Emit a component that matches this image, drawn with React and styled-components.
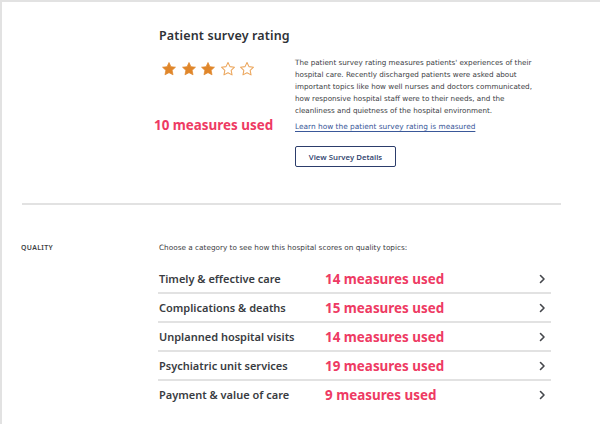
import React from 'react';
import styled, { createGlobalStyle } from 'styled-components';

const Global = createGlobalStyle`
  html, body { margin: 0; padding: 0; background: #ffffff; }
  body { font-family: "DejaVu Sans", "Open Sans", sans-serif; }
  * { box-sizing: border-box; }
`;

const Frame = styled.div`
  width: 600px;
  height: 424px;
  border-top: 2px solid #e2e2e2;
  border-left: 2px solid #e2e2e2;
  overflow: hidden;
  display: flex;
  flex-direction: column;
`;

const SurveySection = styled.section`
  padding: 26px 0 0 152px;
  height: 201px;
`;

const Title = styled.h2`
  margin: 0;
  padding-left: 5px;
  font-family: "Noto Sans", sans-serif;
  font-weight: 600;
  font-size: 12.5px;
  line-height: 16px;
  color: #2f3237;
  letter-spacing: 0.15px;
`;

const SurveyGrid = styled.div`
  display: grid;
  grid-template-columns: 141px 242px;
  margin-top: 13px;
`;

const Summary = styled.div`
  display: flex;
  flex-direction: column;
  align-items: flex-start;
`;

const StarRow = styled.div`
  display: flex;
  gap: 3.5px;
  padding-left: 7px;
  margin-top: 4px;
  height: 16px;
`;

const Measures = styled.span`
  font-family: "Noto Sans", sans-serif;
  font-weight: 700;
  font-size: 13.4px;
  line-height: 18px;
  color: #ee3a63;
  white-space: nowrap;
  margin-top: ${p => p.$top || 0}px;
`;

const Description = styled.div`
  display: flex;
  flex-direction: column;
  align-items: flex-start;
`;

const Paragraph = styled.p`
  margin: 0;
  font-size: 7.2px;
  line-height: 12px;
  color: #3b3c3f;
`;

const LearnLink = styled.a`
  margin-top: 4px;
  font-size: 7.4px;
  line-height: 12px;
  color: #3a5899;
  text-decoration: underline;
  text-underline-offset: 2px;
  white-space: nowrap;
`;

const OutlineButton = styled.button`
  margin-top: 13px;
  width: 101px;
  height: 21px;
  border: 1.5px solid #2c3d6b;
  border-radius: 2px;
  background: #ffffff;
  color: #2c3d6b;
  font-family: "Open Sans", sans-serif;
  font-weight: 600;
  font-size: 7.8px;
  padding: 0;
`;

const Divider = styled.hr`
  margin: 0 0 0 20px;
  width: 539px;
  height: 2px;
  border: none;
  background: #e2e2e2;
`;

const QualitySection = styled.section`
  display: grid;
  grid-template-columns: 137px 393px;
  padding: 37px 0 0 19px;
`;

const SectionLabel = styled.span`
  font-family: "Noto Sans", sans-serif;
  font-weight: 600;
  font-size: 6.9px;
  line-height: 12px;
  letter-spacing: 0.35px;
  color: #3d3f44;
`;

const Intro = styled.p`
  margin: 0;
  padding-left: 1px;
  font-size: 7.3px;
  line-height: 12px;
  color: #3b3c3f;
  white-space: nowrap;
`;

const CategoryList = styled.ul`
  list-style: none;
  margin: 11px 0 0;
  padding: 0;
`;

const CategoryRow = styled.li`
  display: grid;
  grid-template-columns: 167px 1fr auto;
  align-items: center;
  height: 29px;
  padding-right: 5px;
  border-bottom: ${p => (p.$last ? 'none' : '2px solid #e2e2e2')};
  padding-bottom: ${p => (p.$last ? '2px' : '0')};
`;

const CategoryName = styled.span`
  padding-left: 1px;
  font-family: "Noto Sans", sans-serif;
  font-weight: 600;
  font-size: 11px;
  color: #393c42;
  white-space: nowrap;
`;

const Star = ({ filled }) => (
  <svg width="16" height="16" viewBox="0 0 24 24">
    <path
      d="M12 2.2l2.95 6.25 6.8.85-5 4.7 1.3 6.8L12 17.5l-6.05 3.3 1.3-6.8-5-4.7 6.8-.85z"
      fill={filled ? '#e0862a' : 'none'}
      stroke={filled ? '#e0862a' : '#eca75e'}
      strokeWidth={filled ? 1 : 1.6}
      strokeLinejoin="round"
    />
  </svg>
);

const Chevron = () => (
  <svg width="7" height="10" viewBox="0 0 7 10">
    <path d="M1.5 1.5L5 5 1.5 8.5" fill="none" stroke="#45474c" strokeWidth="1.6" strokeLinecap="round" strokeLinejoin="round" />
  </svg>
);

const categories = [
  ['Timely & effective care', 14],
  ['Complications & deaths', 15],
  ['Unplanned hospital visits', 14],
  ['Psychiatric unit services', 19],
  ['Payment & value of care', 9],
];

export default function App() {
  return (
    <>
      <Global />
      <Frame>
        <SurveySection>
          <Title>Patient survey rating</Title>
          <SurveyGrid>
            <Summary>
              <StarRow>
                {[1, 2, 3, 4, 5].map(i => (
                  <Star key={i} filled={i <= 3} />
                ))}
              </StarRow>
              <Measures $top={39}>10 measures used</Measures>
            </Summary>
            <Description>
              <Paragraph>
                The patient survey rating measures patients' experiences of their hospital care. Recently discharged patients were asked about important topics like how well nurses and doctors communicated, how responsive hospital staff were to their needs, and the cleanliness and quietness of the hospital environment.
              </Paragraph>
              <LearnLink href="#">Learn how the patient survey rating is measured</LearnLink>
              <OutlineButton>View Survey Details</OutlineButton>
            </Description>
          </SurveyGrid>
        </SurveySection>
        <Divider />
        <QualitySection>
          <SectionLabel>QUALITY</SectionLabel>
          <div>
            <Intro>Choose a category to see how this hospital scores on quality topics:</Intro>
            <CategoryList>
              {categories.map(([name, n], i) => (
                <CategoryRow key={name} $last={i === categories.length - 1}>
                  <CategoryName>{name}</CategoryName>
                  <Measures>{n} measures used</Measures>
                  <Chevron />
                </CategoryRow>
              ))}
            </CategoryList>
          </div>
        </QualitySection>
      </Frame>
    </>
  );
}
